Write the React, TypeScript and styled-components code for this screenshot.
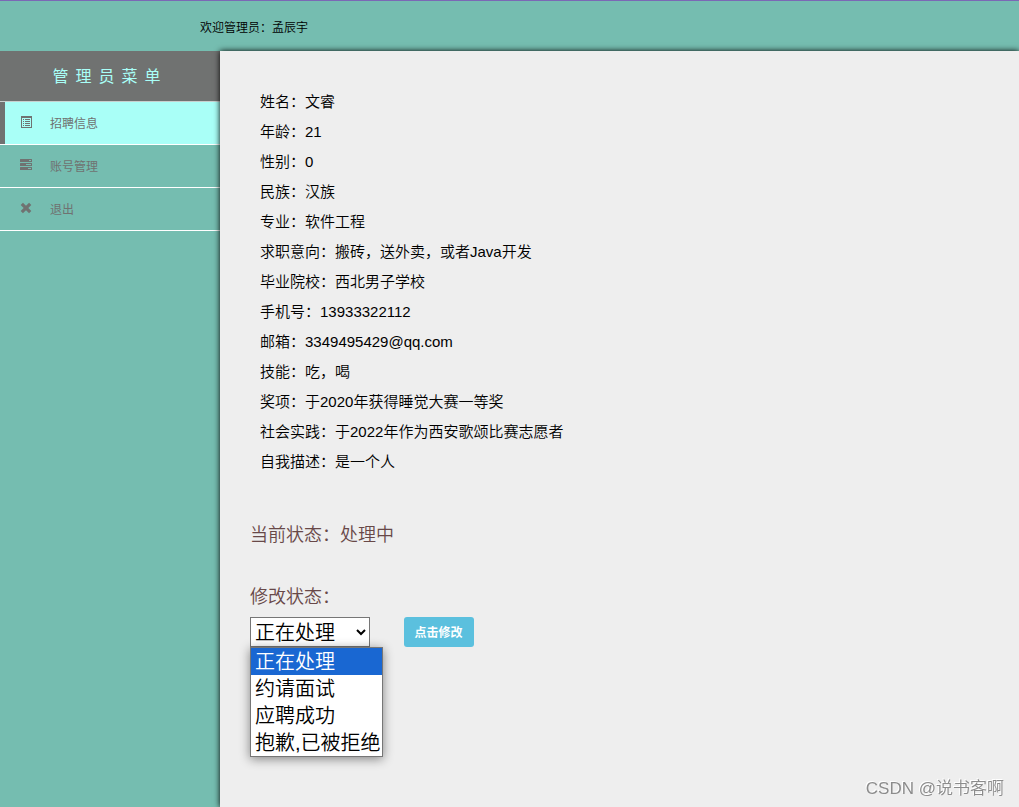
import React, { useState } from "react";
import styled, { createGlobalStyle } from "styled-components";

const colors = {
  teal: "#75bdb0",
  mint: "#a9fff7",
  slate: "#707271",
  page: "#eeeeee",
  status: "#684848",
  info: "#5bc0de",
};

const GlobalStyle = createGlobalStyle`
  *, *::before, *::after { box-sizing: border-box; }
  body {
    margin: 0;
    background: ${colors.teal};
    color: #000;
    font-family: "Liberation Sans", "Noto Sans CJK SC", sans-serif;
    font-weight: 350;
  }
`;

const Page = styled.div`
  display: flex;
  flex-direction: column;
  min-height: 100vh;
`;

const Header = styled.header`
  display: flex;
  align-items: center;
  height: 51px;
  padding-left: 200px;
  border-top: 1px solid #7b68b5;
  font-size: 12px;
`;

const Body = styled.div`
  display: flex;
  flex: 1;
`;

const Sidebar = styled.nav`
  width: 220px;
  flex-shrink: 0;
`;

const MenuTitle = styled.h2`
  margin: 0;
  padding-top: 2px;
  border-bottom: 1px solid #c8d0ce;
  background: ${colors.slate};
  color: ${colors.mint};
  font-size: 16px;
  font-weight: 400;
  line-height: 48px;
  letter-spacing: 7px;
  text-align: center;
`;

const MenuList = styled.ul`
  margin: 0;
  padding: 0;
  list-style: none;
`;

const MenuLink = styled.a<{ $active: boolean }>`
  display: flex;
  align-items: center;
  gap: 17px;
  height: 43px;
  padding: 0 0 2px 20px;
  border-bottom: 1px solid #fff;
  background: ${(p) => (p.$active ? colors.mint : "transparent")};
  box-shadow: ${(p) => (p.$active ? `inset 5px 0 0 ${colors.slate}` : "none")};
  color: ${colors.slate};
  font-size: 12px;
  font-weight: 400;
  text-decoration: none;
`;

const Content = styled.main`
  flex: 1;
  min-width: 0;
  padding: 36px 30px 50px;
  background: ${colors.page};
  box-shadow: 0 0 6px #000;
`;

const Profile = styled.dl`
  margin: 0 0 48px;
  padding: 0 10px;
  font-size: 15px;
  line-height: 30px;
`;

const ProfileRow = styled.div`
  display: flex;
`;

const Term = styled.dt`
  flex-shrink: 0;
`;

const Value = styled.dd`
  margin: 0;
`;

const StatusText = styled.p`
  margin: 0 0 42px;
  color: ${colors.status};
  font-size: 18px;
  line-height: 20px;
`;

const StatusLabel = styled.label`
  display: block;
  margin-bottom: 10px;
  color: ${colors.status};
  font-size: 18px;
  line-height: 20px;
`;

const Controls = styled.div`
  display: flex;
  gap: 34px;
`;

const SelectBox = styled.div`
  position: relative;
`;

const Select = styled.select`
  display: block;
  width: 120px;
  height: 30px;
  padding: 1px 0 0;
  border: 1px solid #767676;
  border-radius: 0;
  background-color: #fff;
  color: #000;
  font-family: inherit;
  font-size: 20px;
  font-weight: inherit;
`;

const Options = styled.ul`
  position: absolute;
  top: 100%;
  left: 0;
  margin: 0;
  padding: 0;
  border: 1px solid #767676;
  background: #fff;
  box-shadow: 0 2px 10px rgba(0, 0, 0, 0.45);
  list-style: none;
`;

const Option = styled.li<{ $selected: boolean }>`
  padding: 1px 1px 0 4px;
  background: ${(p) => (p.$selected ? "#1967d2" : "#fff")};
  color: ${(p) => (p.$selected ? "#fff" : "#000")};
  font-size: 20px;
  line-height: 26px;
  white-space: nowrap;
`;

const SubmitButton = styled.button`
  width: 70px;
  height: 30px;
  padding: 0 1px 2px 0;
  border: 0;
  border-radius: 3px;
  background: ${colors.info};
  color: #fff;
  font-family: inherit;
  font-size: 12px;
  font-weight: 700;
`;

const Watermark = styled.div`
  position: fixed;
  right: 15px;
  bottom: 8px;
  color: #8c8c8c;
  font-size: 17px;
  line-height: 20px;
  text-shadow: -1px -1px 0 #fff;
`;

const ListIcon = () => (
  <svg width="13" height="13" viewBox="0 0 13 13" fill={colors.slate} aria-hidden="true">
    <path fillRule="evenodd" d="M1 0H12V12H1ZM2 2V11H11V2Z" />
    <path d="M3 3h1v1H3zM5 3h5v1H5zM3 5h1v1H3zM5 5h5v1H5zM3 7h1v1H3zM5 7h5v1H5zM3 9h1v1H3zM5 9h5v1H5z" />
  </svg>
);

const TasksIcon = () => (
  <svg width="13" height="13" viewBox="0 0 13 13" fill={colors.slate} aria-hidden="true">
    <path
      fillRule="evenodd"
      d="M.5 0H11.500Q12 0 12 .5V2.500Q12 3 11.500 3H.5Q0 3 0 2.500V.5Q0 0 .5 0ZM9 1V2H11V1Z
         M.5 4H11.500Q12 4 12 4.500V6.500Q12 7 11.500 7H.5Q0 7 0 6.500V4.500Q0 4 .5 4ZM6 5V6H11V5Z
         M.5 8H11.500Q12 8 12 8.500V10.500Q12 11 11.500 11H.5Q0 11 0 10.500V8.500Q0 8 .5 8ZM8 9V10H11V9Z"
    />
  </svg>
);

const RemoveIcon = () => (
  <svg width="13" height="13" viewBox="0 0 13 13" fill={colors.slate} aria-hidden="true">
    <path d="M3.200 .9 6 3.700 8.800 .9Q9 .7 9.300 .9L11.100 2.700Q11.300 3 11.100 3.200L8.300 6 11.100 8.800Q11.300 9 11.100 9.300L9.300 11.100Q9 11.300 8.800 11.100L6 8.300 3.200 11.100Q3 11.300 2.700 11.100L.9 9.300Q.7 9 .9 8.800L3.700 6 .9 3.200Q.7 3 .9 2.700L2.700 .9Q3 .7 3.200 .9Z" />
  </svg>
);

const menu = [
  { label: "招聘信息", Icon: ListIcon },
  { label: "账号管理", Icon: TasksIcon },
  { label: "退出", Icon: RemoveIcon },
];

const profile = [
  ["姓名：", "文睿"],
  ["年龄：", "21"],
  ["性别：", "0"],
  ["民族：", "汉族"],
  ["专业：", "软件工程"],
  ["求职意向：", "搬砖，送外卖，或者Java开发"],
  ["毕业院校：", "西北男子学校"],
  ["手机号：", "13933322112"],
  ["邮箱：", "3349495429@qq.com"],
  ["技能：", "吃，喝"],
  ["奖项：", "于2020年获得睡觉大赛一等奖"],
  ["社会实践：", "于2022年作为西安歌颂比赛志愿者"],
  ["自我描述：", "是一个人"],
];

const states = ["正在处理", "约请面试", "应聘成功", "抱歉,已被拒绝"];

export default function App() {
  const [status, setStatus] = useState(states[0]);

  return (
    <Page lang="zh-CN">
      <GlobalStyle />
      <Header>欢迎管理员：孟辰宇</Header>
      <Body>
        <Sidebar>
          <MenuTitle>管理员菜单</MenuTitle>
          <MenuList>
            {menu.map(({ label, Icon }, i) => (
              <li key={label}>
                <MenuLink href="#" $active={i === 0}>
                  <Icon />
                  {label}
                </MenuLink>
              </li>
            ))}
          </MenuList>
        </Sidebar>
        <Content>
          <Profile>
            {profile.map(([term, value]) => (
              <ProfileRow key={term}>
                <Term>{term}</Term>
                <Value>{value}</Value>
              </ProfileRow>
            ))}
          </Profile>
          <StatusText>当前状态：处理中</StatusText>
          <StatusLabel htmlFor="status">修改状态：</StatusLabel>
          <Controls>
            <SelectBox>
              <Select id="status" value={status} onChange={(e) => setStatus(e.target.value)}>
                {states.map((s) => (
                  <option key={s}>{s}</option>
                ))}
              </Select>
              <Options role="listbox" aria-label="修改状态">
                {states.map((s) => (
                  <Option
                    key={s}
                    role="option"
                    aria-selected={s === status}
                    $selected={s === status}
                    onClick={() => setStatus(s)}
                  >
                    {s}
                  </Option>
                ))}
              </Options>
            </SelectBox>
            <SubmitButton type="button">点击修改</SubmitButton>
          </Controls>
        </Content>
      </Body>
      <Watermark>CSDN @说书客啊</Watermark>
    </Page>
  );
}
